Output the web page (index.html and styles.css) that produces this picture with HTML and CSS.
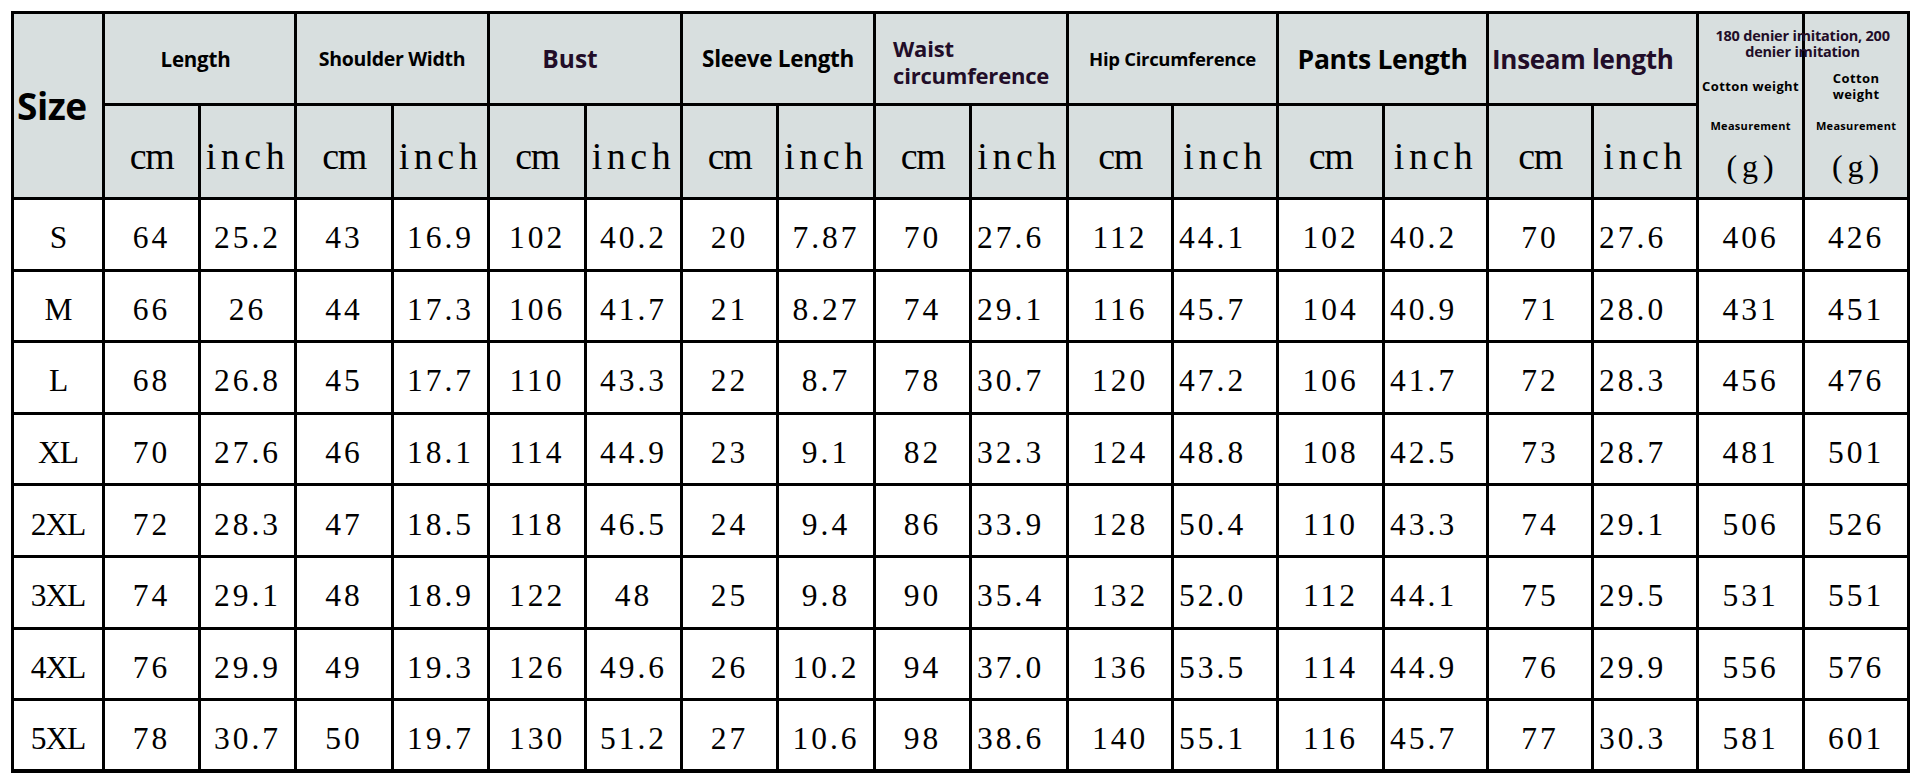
FILE: index.html
```html
<!DOCTYPE html>
<html lang="en">
<head>
<meta charset="utf-8">
<title>Size Chart</title>
<link rel="stylesheet" href="styles.css">
</head>
<body>
<table class="chart">
  <colgroup>
    <col class="w91">
    <col class="w96"><col class="w96">
    <col class="w97"><col class="w96">
    <col class="w97"><col class="w96">
    <col class="w96"><col class="w97">
    <col class="w96"><col class="w97">
    <col class="w105"><col class="w105">
    <col class="w106"><col class="w104">
    <col class="w105"><col class="w105">
    <col class="w106"><col class="w105">
  </colgroup>
  <thead>
    <tr class="h1">
      <th rowspan="2" class="size-h">Size</th>
      <th colspan="2" class="t-len">Length</th>
      <th colspan="2" class="t-sh">Shoulder Width</th>
      <th colspan="2" class="t-bust purple">Bust</th>
      <th colspan="2" class="t-sl">Sleeve Length</th>
      <th colspan="2" class="t-waist purple">Waist<br>circumference</th>
      <th colspan="2" class="t-hip">Hip Circumference</th>
      <th colspan="2" class="t-pants">Pants Length</th>
      <th colspan="2" class="t-ins purple">Inseam length</th>
      <th rowspan="2" class="wt">
        <div class="wt-box">
          <div class="wt-title purple"><span class="wt-title-text">180 denier imitation, 200<br>denier imitation</span></div>
          <div class="wt-cot">Cotton weight</div>
          <div class="wt-meas">Measurement</div>
          <div class="wt-g">(g)</div>
        </div>
      </th>
      <th rowspan="2" class="wt">
        <div class="wt-box">
          <div class="wt-title"></div>
          <div class="wt-cot">Cotton<br>weight</div>
          <div class="wt-meas">Measurement</div>
          <div class="wt-g">(g)</div>
        </div>
      </th>
    </tr>
    <tr class="h2">
      <th class="u cm">cm</th><th class="u inch">inch</th>
      <th class="u cm">cm</th><th class="u inch">inch</th>
      <th class="u cm">cm</th><th class="u inch">inch</th>
      <th class="u cm">cm</th><th class="u inch">inch</th>
      <th class="u cm">cm</th><th class="u inch">inch</th>
      <th class="u cm">cm</th><th class="u inch">inch</th>
      <th class="u cm">cm</th><th class="u inch">inch</th>
      <th class="u cm">cm</th><th class="u inch">inch</th>
    </tr>
  </thead>
  <tbody>
    <tr><td>S</td><td>64</td><td>25.2</td><td>43</td><td>16.9</td><td>102</td><td>40.2</td><td>20</td><td>7.87</td><td>70</td><td>27.6</td><td>112</td><td>44.1</td><td>102</td><td>40.2</td><td>70</td><td>27.6</td><td>406</td><td>426</td></tr>
    <tr><td>M</td><td>66</td><td>26</td><td>44</td><td>17.3</td><td>106</td><td>41.7</td><td>21</td><td>8.27</td><td>74</td><td>29.1</td><td>116</td><td>45.7</td><td>104</td><td>40.9</td><td>71</td><td>28.0</td><td>431</td><td>451</td></tr>
    <tr><td>L</td><td>68</td><td>26.8</td><td>45</td><td>17.7</td><td>110</td><td>43.3</td><td>22</td><td>8.7</td><td>78</td><td>30.7</td><td>120</td><td>47.2</td><td>106</td><td>41.7</td><td>72</td><td>28.3</td><td>456</td><td>476</td></tr>
    <tr><td>XL</td><td>70</td><td>27.6</td><td>46</td><td>18.1</td><td>114</td><td>44.9</td><td>23</td><td>9.1</td><td>82</td><td>32.3</td><td>124</td><td>48.8</td><td>108</td><td>42.5</td><td>73</td><td>28.7</td><td>481</td><td>501</td></tr>
    <tr><td>2XL</td><td>72</td><td>28.3</td><td>47</td><td>18.5</td><td>118</td><td>46.5</td><td>24</td><td>9.4</td><td>86</td><td>33.9</td><td>128</td><td>50.4</td><td>110</td><td>43.3</td><td>74</td><td>29.1</td><td>506</td><td>526</td></tr>
    <tr><td>3XL</td><td>74</td><td>29.1</td><td>48</td><td>18.9</td><td>122</td><td>48</td><td>25</td><td>9.8</td><td>90</td><td>35.4</td><td>132</td><td>52.0</td><td>112</td><td>44.1</td><td>75</td><td>29.5</td><td>531</td><td>551</td></tr>
    <tr><td>4XL</td><td>76</td><td>29.9</td><td>49</td><td>19.3</td><td>126</td><td>49.6</td><td>26</td><td>10.2</td><td>94</td><td>37.0</td><td>136</td><td>53.5</td><td>114</td><td>44.9</td><td>76</td><td>29.9</td><td>556</td><td>576</td></tr>
    <tr><td>5XL</td><td>78</td><td>30.7</td><td>50</td><td>19.7</td><td>130</td><td>51.2</td><td>27</td><td>10.6</td><td>98</td><td>38.6</td><td>140</td><td>55.1</td><td>116</td><td>45.7</td><td>77</td><td>30.3</td><td>581</td><td>601</td></tr>
  </tbody>
</table>
</body>
</html>
```
FILE: styles.css
```css
html, body {
  margin: 0;
  padding: 0;
  background: #ffffff;
}
body {
  padding: 11px 0 0 11px;
}
.chart {
  border-collapse: collapse;
  table-layout: fixed;
  width: 1897px;
  color: #000;
}
.w91 { width: 91px; }
.w96 { width: 96px; }
.w97 { width: 97px; }
.w104 { width: 104px; }
.w105 { width: 105px; }
.w106 { width: 106px; }

.chart th, .chart td {
  border: 3px solid #000;
  padding: 0;
  overflow: visible;
}
.chart tbody tr:last-child td { border-bottom-width: 4px; }
.chart thead th {
  background: #d8dfdf;
  font-family: "Open Sans", "Liberation Sans", sans-serif;
  font-weight: 700;
  text-align: center;
  vertical-align: middle;
  white-space: nowrap;
}
.h1 { height: 92px; }
.h2 { height: 94px; }
.chart tbody tr { height: 71.6px; }

.purple { color: #220d28; }

.size-h {
  text-align: left !important;
  padding-left: 3px !important;
  font-size: 37px;
  letter-spacing: -0.5px;
}
.t-len { font-size: 20.5px; letter-spacing: -0.2px; padding-right: 8px !important; }
.t-sh { font-size: 19.5px; letter-spacing: -0.3px; }
.t-bust { font-size: 24.5px; padding-right: 30px !important; }
.t-sl { font-size: 22.5px; letter-spacing: -0.3px; }
.t-waist {
  font-size: 22px;
  line-height: 27px;
  text-align: left !important;
  padding: 6px 0 0 17px !important;
  letter-spacing: -0.2px;
}
.t-hip { font-size: 18.5px; letter-spacing: -0.3px; }
.t-pants { font-size: 26.5px; letter-spacing: -0.3px; }
.t-ins {
  font-size: 26px;
  letter-spacing: -0.3px;
  text-align: left !important;
  padding-left: 3px !important;
}

.u {
  font-family: "Liberation Serif", "DejaVu Serif", serif !important;
  font-weight: 400 !important;
  font-size: 38px;
  padding-top: 8px !important;
}
.u.cm { letter-spacing: -1.5px; }
.u.inch { letter-spacing: 4.5px; }

.wt { vertical-align: top !important; }
.wt-box {
  display: flex;
  flex-direction: column;
  height: 183px;
}
.wt-title {
  height: 60px;
  display: flex;
  align-items: center;
  justify-content: center;
  font-size: 14.5px;
  line-height: 16px;
  letter-spacing: -0.2px;
  position: relative;
  z-index: 1;
}
.wt-title-text {
  display: block;
  width: 220px;
  margin-left: 104px;
  flex: none;
  text-align: center;
}
.wt-cot {
  height: 24px;
  display: flex;
  align-items: center;
  justify-content: center;
  font-size: 13px;
  line-height: 16px;
  letter-spacing: 0.4px;
  white-space: normal;
}
.wt-meas {
  height: 54px;
  display: flex;
  align-items: center;
  justify-content: center;
  font-size: 11px;
  letter-spacing: 0.3px;
}
.wt-g {
  height: 28px;
  display: flex;
  align-items: center;
  justify-content: center;
  font-family: "Liberation Serif", "DejaVu Serif", serif;
  font-weight: 400;
  font-size: 32px;
  letter-spacing: 5px;
  padding-left: 4px;
}

.chart tbody td {
  font-family: "Liberation Serif", "DejaVu Serif", serif;
  font-size: 31.5px;
  letter-spacing: 3px;
  text-align: center;
  vertical-align: middle;
  padding-top: 8px;
  white-space: nowrap;
}
.chart tbody td:first-child { letter-spacing: -1px; }
.chart tbody td:nth-child(11),
.chart tbody td:nth-child(13),
.chart tbody td:nth-child(15),
.chart tbody td:nth-child(17) {
  text-align: left;
  padding-left: 5px;
}
```
